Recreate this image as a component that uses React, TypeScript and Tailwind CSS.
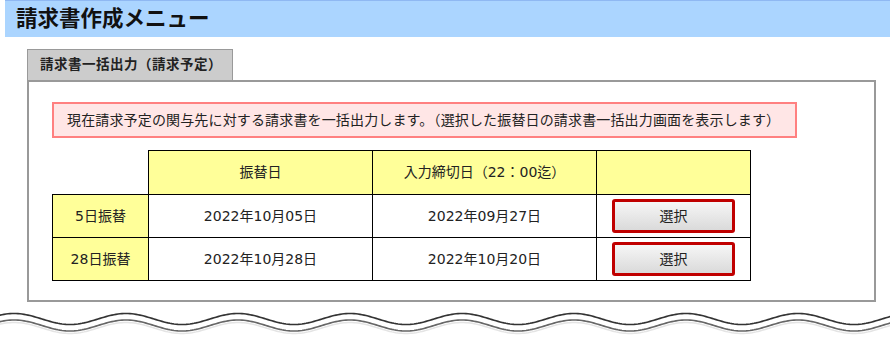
import React from "react";

const rows = [
  { label: "5日振替", date: "2022年10月05日", deadline: "2022年09月27日" },
  { label: "28日振替", date: "2022年10月28日", deadline: "2022年10月20日" },
];

// sine wave path for the "cut off" edge
const wavePath = (offset: number) => {
  const pts: string[] = [];
  for (let x = -4; x <= 894; x += 2) {
    const y = offset + 5.5 * Math.cos(((x - 70) / 112) * Math.PI * 2);
    pts.push(`${x},${y.toFixed(2)}`);
  }
  return "M" + pts.join(" L");
};

const SelectButton = () => (
  <button className="w-[123px] h-[34px] rounded-[3px] border-[3px] border-[#c00000] bg-gradient-to-b from-[#f6f6f6] to-[#dadada] text-[14px] text-[#222]">
    選択
  </button>
);

export default function App() {
  return (
    <div
      className="w-[890px] h-[349px] bg-white text-[#222] overflow-hidden"
      style={{ fontFamily: '"DejaVu Sans", "Noto Sans CJK JP", sans-serif' }}
    >
      <div className="ml-[5px] h-[37px] bg-[#abd5ff] border-t border-[#8fb8f2] flex items-center pl-[11px]">
        <h1 className="text-[21.5px] font-bold leading-none text-[#111]">請求書作成メニュー</h1>
      </div>

      <div className="pl-[27px] pr-[14px] mt-[12px]">
        <div className="w-[206px] h-[31px] bg-[#cccccc] border border-b-0 border-[#999] flex items-center pl-[12px] text-[13.5px] tracking-[0.5px] font-bold leading-none text-[#222]">
          請求書一括出力（請求予定）
        </div>
        <div className="border-2 border-[#999] pl-[23px] pt-[20px] pb-[19px]">
          <div className="w-[745px] h-[36px] border-2 border-[#ff8080] bg-[#ffe6e6] flex items-center pl-[13px] text-[14px] tracking-[0.15px] whitespace-nowrap">
            現在請求予定の関与先に対する請求書を一括出力します。（選択した振替日の請求書一括出力画面を表示します）
          </div>

          <table className="mt-[12px] border-collapse text-[14px] text-center">
            <thead>
              <tr className="h-[44px]">
                <th className="w-[96px] p-0" />
                <th className="w-[224px] p-0 font-normal bg-[#ffff99] border border-black">振替日</th>
                <th className="w-[224px] p-0 font-normal bg-[#ffff99] border border-black">入力締切日（22：00迄）</th>
                <th className="w-[154px] p-0 font-normal bg-[#ffff99] border border-black" />
              </tr>
            </thead>
            <tbody>
              {rows.map((r) => (
                <tr key={r.label} className="h-[43px]">
                  <td className="p-0 bg-[#ffff99] border border-black">{r.label}</td>
                  <td className="p-0 border border-black">{r.date}</td>
                  <td className="p-0 border border-black">{r.deadline}</td>
                  <td className="p-0 border border-black">
                    <div className="flex justify-center">
                      <SelectButton />
                    </div>
                  </td>
                </tr>
              ))}
            </tbody>
          </table>
        </div>
      </div>

      <svg width="890" height="40" className="block mt-[4px]">
        <path d={wavePath(13)} fill="none" stroke="#333" strokeWidth="1.6" />
        <path d={wavePath(19.5)} fill="none" stroke="#666" strokeWidth="1.6" />
        <path d={wavePath(22)} fill="none" stroke="#e4e4e4" strokeWidth="1.5" />
      </svg>
    </div>
  );
}
